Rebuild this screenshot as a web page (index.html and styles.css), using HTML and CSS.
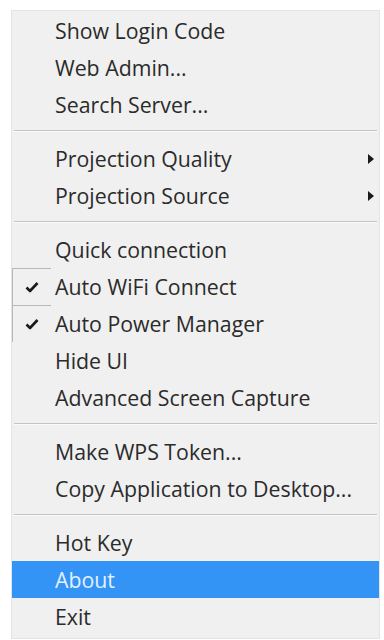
FILE: index.html
```html
<!DOCTYPE html>
<html>
<head>
<meta charset="utf-8">
<link rel="stylesheet" href="styles.css">
</head>
<body>
<div class="menu">
  <div class="item">Show Login Code</div>
  <div class="item">Web Admin...</div>
  <div class="item">Search Server...</div>
  <div class="sep"></div>
  <div class="item sub">Projection Quality<span class="arrow"></span></div>
  <div class="item sub">Projection Source<span class="arrow"></span></div>
  <div class="sep"></div>
  <div class="item">Quick connection</div>
  <div class="item checked"><span class="check"><svg width="14" height="12" viewBox="0 0 14 12"><path d="M1.5 6.5 L5 10 L12.5 2" fill="none" stroke="#1a1a1a" stroke-width="2.6" stroke-linejoin="round"/></svg></span>Auto WiFi Connect</div>
  <div class="item checked"><span class="check"><svg width="14" height="12" viewBox="0 0 14 12"><path d="M1.5 6.5 L5 10 L12.5 2" fill="none" stroke="#1a1a1a" stroke-width="2.6" stroke-linejoin="round"/></svg></span>Auto Power Manager</div>
  <div class="item">Hide UI</div>
  <div class="item">Advanced Screen Capture</div>
  <div class="sep"></div>
  <div class="item">Make WPS Token...</div>
  <div class="item">Copy Application to Desktop...</div>
  <div class="sep"></div>
  <div class="item">Hot Key</div>
  <div class="item active">About</div>
  <div class="item">Exit</div>
</div>
</body>
</html>
```
FILE: styles.css
```css
html, body {
  margin: 0;
  padding: 0;
  background: #ffffff;
}
.menu {
  margin: 10px 0 0 11px;
  width: 369px;
  box-sizing: border-box;
  background: #f0f0f0;
  border: 1px solid #e4e4e4;
  padding: 1px 0 3px 0;
  font-family: "Open Sans", "Noto Sans", sans-serif;
  font-size: 21.3px;
  color: #2b2b2b;
}
.item {
  position: relative;
  height: 37px;
  line-height: 37px;
  padding-left: 43px;
  white-space: nowrap;
}
.item.active {
  background: #3394f5;
  color: #e3f0ff;
}
.sep {
  height: 17px;
  position: relative;
}
.sep::before {
  content: "";
  position: absolute;
  left: 2px;
  right: 2px;
  top: 7px;
  height: 1px;
  background: #c4c4c4;
  border-bottom: 1px solid #fbfbfb;
}
.arrow {
  position: absolute;
  right: 5px;
  top: 14px;
  width: 0;
  height: 0;
  border-left: 6px solid #1a1a1a;
  border-top: 5px solid transparent;
  border-bottom: 5px solid transparent;
}
.check {
  position: absolute;
  left: 0;
  top: 0;
  width: 38px;
  height: 36px;
  border-top: 1px solid #b8b8b8;
  border-left: 1px solid #b8b8b8;
  display: flex;
  align-items: center;
  justify-content: center;
}
```
